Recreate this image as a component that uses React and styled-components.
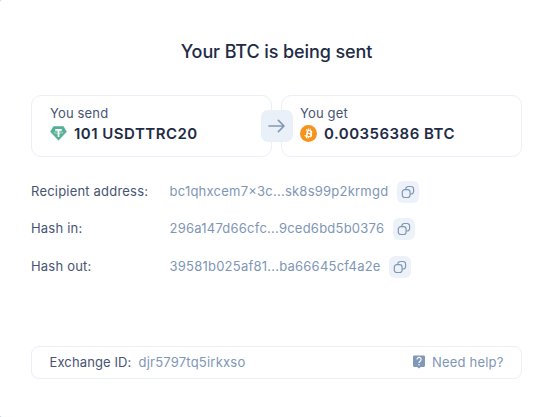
import React from 'react';
import styled, { createGlobalStyle } from 'styled-components';

const GlobalStyle = createGlobalStyle`
  *, *::before, *::after {
    box-sizing: border-box;
  }

  body {
    margin: 0;
    background: #b4c8ec;
    font-family: Inter, "Liberation Sans", sans-serif;
  }
`;

const Panel = styled.main`
  display: flex;
  flex-direction: column;
  width: 546px;
  height: 417px;
  padding: 39px 24px 38px 31px;
  border-radius: 2px 0 0 2px;
  background: #fff;
`;

const Title = styled.h1`
  width: 491px;
  margin: 0;
  color: #222b45;
  font-size: 18px;
  line-height: 26px;
  font-weight: 500;
  letter-spacing: -0.1px;
  text-align: center;
`;

const Exchange = styled.section`
  position: relative;
  display: flex;
  justify-content: space-between;
  width: 491px;
  margin-top: 30px;
`;

const AmountCard = styled.div`
  width: 241px;
  height: 62px;
  padding: 8px 18px;
  border: 1px solid #ebeff7;
  border-radius: 10px;
`;

const AmountLabel = styled.div`
  color: #475474;
  font-size: 13px;
  line-height: 18px;
  letter-spacing: 0.15px;
`;

const Amount = styled.div`
  display: flex;
  align-items: center;
  gap: 7px;
  height: 22px;
  color: #222b45;
  font-size: 15px;
  font-weight: 600;
  letter-spacing: 0.48px;
`;

const ArrowBadge = styled.div`
  position: absolute;
  top: 15px;
  left: 229.7px;
  display: flex;
  align-items: center;
  justify-content: center;
  width: 32px;
  height: 32px;
  border-radius: 7px;
  background: #eaf0f8;
`;

const Details = styled.dl`
  display: flex;
  flex-direction: column;
  gap: 15.4px;
  margin: 24px 0 0;
`;

const DetailRow = styled.div`
  display: flex;
  align-items: center;
  height: 22px;
  font-size: 13px;
  line-height: 16px;
`;

const DetailName = styled.dt`
  width: 138.5px;
  padding-bottom: 2px;
  color: #475474;
  letter-spacing: 0.2px;
`;

const DetailValue = styled.dd`
  margin: 0;
  padding-bottom: 2px;
  color: #8096b6;
  letter-spacing: 0.23px;
  font-feature-settings: "calt" 1;
`;

const CopyButton = styled.button`
  display: flex;
  align-items: center;
  justify-content: center;
  width: 22px;
  height: 22px;
  margin-left: 8.5px;
  padding: 0;
  border: 0;
  border-radius: 6px;
  background: #edf2f9;
  cursor: pointer;
`;

const Footer = styled.footer`
  display: flex;
  align-items: center;
  justify-content: space-between;
  width: 491px;
  height: 33px;
  margin-top: auto;
  padding: 0 17.5px 2px;
  border: 1px solid #ebeff7;
  border-radius: 8px;
  color: #475474;
  font-size: 13px;
  letter-spacing: 0.12px;
`;

const ExchangeId = styled.span`
  margin-left: 7px;
  color: #8096b6;
  letter-spacing: 0.22px;
`;

const HelpLink = styled.a`
  display: flex;
  align-items: center;
  gap: 7.5px;
  color: #8096b6;
  letter-spacing: 0.18px;
  cursor: pointer;
`;

const TetherIcon = () => (
  <svg width="17" height="17" viewBox="0 0 17 17">
    <path d="M3.6 1.5h9.8l3.1 5.3-8 8.5-8-8.5Z" fill="#53ae94" stroke="#53ae94" strokeWidth="0.5" strokeLinejoin="round" />
    <path d="M5.2 3.9h6.6v1.8H9.4v6.2H7.6V5.7H5.2Z" fill="#fff" />
    <ellipse cx="8.5" cy="7.6" rx="4.7" ry="0.9" fill="none" stroke="#fff" strokeWidth="0.4" />
  </svg>
);

const BitcoinIcon = () => (
  <svg width="17" height="17" viewBox="0 0 32 32">
    <circle cx="16" cy="16" r="16" fill="#f7931a" />
    <path
      d="M23.19 14.02c.31-2.1-1.29-3.23-3.47-3.98l.7-2.84-1.72-.43-.69 2.77-1.38-.33.69-2.78-1.72-.43-.71 2.84-1.1-.26-2.38-.6-.46 1.84s1.28.3 1.26.31c.7.18.82.64.8 1l-.8 3.24-1.12 4.53c-.09.21-.3.53-.79.4l-1.26-.31-.86 1.98 3.46.87-.72 2.87 1.72.43.72-2.84 1.37.36-.7 2.83 1.72.43.71-2.87c2.94.56 5.15.34 6.08-2.32.75-2.14-.04-3.38-1.58-4.18 1.12-.26 1.97-1 2.23-2.53m-3.95 5.54c-.53 2.14-4.13.98-5.3.69l.95-3.79c1.17.29 4.91.87 4.35 3.1m.53-5.57c-.48 1.95-3.48.96-4.45.72l.86-3.44c.97.24 4.1.7 3.59 2.72"
      fill="#fff"
    />
  </svg>
);

const ArrowIcon = () => (
  <svg width="17" height="14" viewBox="0 0 17 14" fill="none" stroke="#8298b8" strokeWidth="1.65" strokeLinecap="round" strokeLinejoin="round">
    <path d="M1 7h15M10.4 1.4 16 7l-5.6 5.6" />
  </svg>
);

const CopyIcon = () => (
  <svg width="14" height="14" viewBox="0 0 14 14" fill="none" stroke="#8096b6" strokeWidth="1.2" strokeLinecap="round">
    <rect x="1.3" y="4.7" width="7.8" height="7.8" rx="2.5" />
    <path d="M4.8 4.3V4a2.5 2.5 0 0 1 2.5-2.5h2.8A2.5 2.5 0 0 1 12.6 4v2.5A2.5 2.5 0 0 1 10.1 9h-.6" />
  </svg>
);

const HelpIcon = () => (
  <svg width="12" height="14" viewBox="0 0 12 14">
    <path d="M1.3 0.5h9.4a1.3 1.3 0 0 1 1.3 1.3v8.8a1.3 1.3 0 0 1-1.3 1.3H7.7L6 13.5l-1.7-1.6h-3A1.3 1.3 0 0 1 0 10.6V1.8A1.3 1.3 0 0 1 1.3.5Z" fill="#8298b8" />
    <path d="M4 4.4a2.05 2.05 0 1 1 3.4 1.6C6.5 6.8 6 7.1 6 8" fill="none" stroke="#fff" strokeWidth="1.15" />
    <path d="M5.4 9h1.2v1.2H5.4Z" fill="#fff" />
  </svg>
);

const details = [
  { name: 'Recipient address:', value: 'bc1qhxcem7x3c...sk8s99p2krmgd' },
  { name: 'Hash in:', value: '296a147d66cfc...9ced6bd5b0376' },
  { name: 'Hash out:', value: '39581b025af81...ba66645cf4a2e' },
];

const App = () => {
  const handleCopy = (value) => {
    navigator.clipboard?.writeText(value);
  };

  return (
    <>
      <GlobalStyle />
      <Panel>
        <Title>Your BTC is being sent</Title>
        <Exchange>
          <AmountCard>
            <AmountLabel>You send</AmountLabel>
            <Amount>
              <TetherIcon />
              101 USDTTRC20
            </Amount>
          </AmountCard>
          <AmountCard>
            <AmountLabel>You get</AmountLabel>
            <Amount>
              <BitcoinIcon />
              0.00356386 BTC
            </Amount>
          </AmountCard>
          <ArrowBadge>
            <ArrowIcon />
          </ArrowBadge>
        </Exchange>
        <Details>
          {details.map(({ name, value }) => (
            <DetailRow key={name}>
              <DetailName>{name}</DetailName>
              <DetailValue>{value}</DetailValue>
              <CopyButton onClick={() => handleCopy(value)}>
                <CopyIcon />
              </CopyButton>
            </DetailRow>
          ))}
        </Details>
        <Footer>
          <div>
            Exchange ID:
            <ExchangeId>djr5797tq5irkxso</ExchangeId>
          </div>
          <HelpLink>
            <HelpIcon />
            Need help?
          </HelpLink>
        </Footer>
      </Panel>
    </>
  );
};

export default App;
